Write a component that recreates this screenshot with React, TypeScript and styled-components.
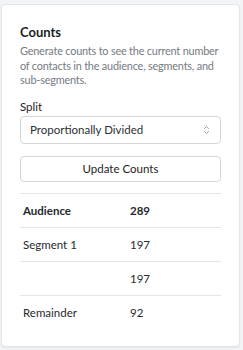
import React from "react";
import styled, { createGlobalStyle } from "styled-components";

const Global = createGlobalStyle`
  html, body { margin: 0; padding: 0; background: #f3f4f6; }
  body { font-family: "Lato", "Noto Sans", sans-serif; color: #1f2328; }
  * { box-sizing: border-box; }
`;

const Page = styled.div`
  padding: 4px 3px 4px 1px;
`;

const Card = styled.section`
  background: #fff;
  border: 1px solid #e2e4e8;
  border-radius: 4px;
  box-shadow: 0 1px 2px rgba(0,0,0,0.06);
  padding: 18px 18px 16px 18px;
  display: flex;
  flex-direction: column;
`;

const Title = styled.h2`
  margin: 0;
  font-size: 13px;
  font-weight: 700;
  line-height: 18px;
  color: #1b1f24;
`;

const Desc = styled.p`
  margin: 3px -2px 0 0;
  font-size: 10.9px;
  line-height: 14.5px;
  letter-spacing: -0.2px;
  color: #767b82;
`;

const Label = styled.label`
  margin-top: 11px;
  font-size: 11.5px;
  line-height: 15px;
  color: #1f2328;
`;

const SelectBox = styled.div`
  margin-top: 2px;
  height: 28px;
  border: 1px solid #d4d6da;
  border-radius: 4px;
  display: flex;
  align-items: center;
  justify-content: space-between;
  padding: 0 10px 0 9px;
  font-size: 11.5px;
  color: #2a2e33;
`;

const Button = styled.button`
  margin-top: 12px;
  height: 26px;
  border: 1px solid #d4d6da;
  border-radius: 4px;
  background: #fff;
  font-family: inherit;
  font-size: 11.5px;
  color: #1f2328;
  padding: 0;
`;

const Table = styled.div`
  margin-top: 11px;
  border-top: 1px solid #e3e5e8;
  display: flex;
  flex-direction: column;
`;

const Row = styled.div<{ $last?: boolean }>`
  display: grid;
  grid-template-columns: 107px 1fr;
  height: 34px;
  align-items: center;
  padding-left: 3px;
  font-size: 11.5px;
  border-bottom: ${(p) => (p.$last ? "none" : "1px solid #e3e5e8")};
`;

const Cell = styled.span<{ $bold?: boolean }>`
  font-weight: ${(p) => (p.$bold ? 700 : 400)};
  color: #26292d;
`;

const Chevrons = () => (
  <svg width="7" height="10" viewBox="0 0 7 10" fill="none" stroke="#9aa0a6" strokeWidth="1" strokeLinecap="round" strokeLinejoin="round">
    <path d="M1.5 3.5 L3.5 1.5 L5.5 3.5" />
    <path d="M1.5 6.5 L3.5 8.5 L5.5 6.5" />
  </svg>
);

const rows = [
  { name: "Audience", value: "289", bold: true },
  { name: "Segment 1", value: "197" },
  { name: "", value: "197" },
  { name: "Remainder", value: "92" },
];

export default function App() {
  return (
    <>
      <Global />
      <Page>
        <Card>
          <Title>Counts</Title>
          <Desc>
            Generate counts to see the current number of contacts in the audience, segments, and sub-segments.
          </Desc>
          <Label>Split</Label>
          <SelectBox>
            <span>Proportionally Divided</span>
            <Chevrons />
          </SelectBox>
          <Button>Update Counts</Button>
          <Table>
            {rows.map((r, i) => (
              <Row key={i} $last={i === rows.length - 1}>
                <Cell $bold={r.bold}>{r.name}</Cell>
                <Cell $bold={r.bold}>{r.value}</Cell>
              </Row>
            ))}
          </Table>
        </Card>
      </Page>
    </>
  );
}
